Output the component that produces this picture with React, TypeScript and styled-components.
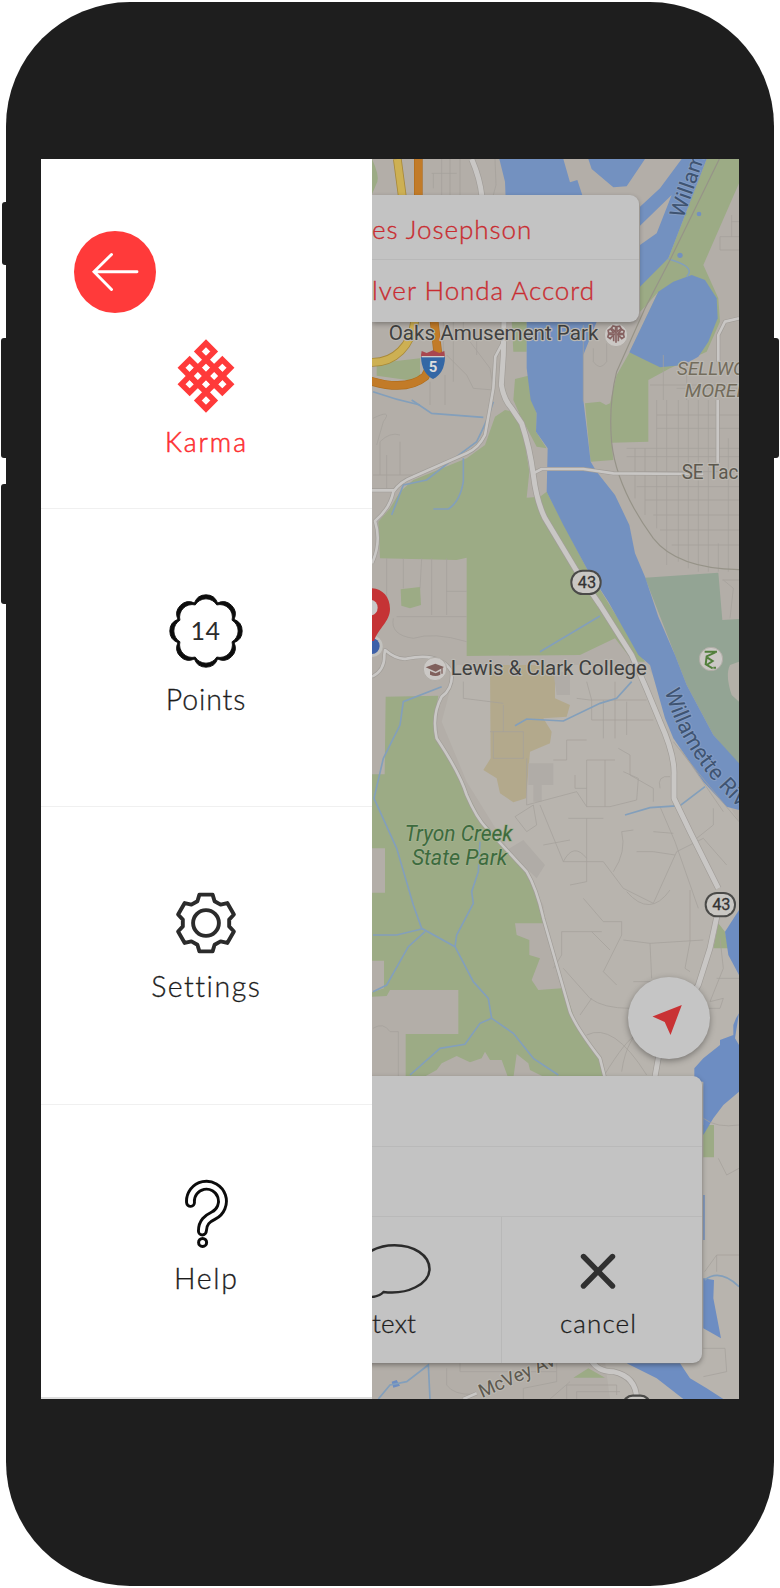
import React from "react";
import styled, { createGlobalStyle } from "styled-components";

const GlobalStyle = createGlobalStyle`
  * { box-sizing: border-box; }
  body { margin: 0; background: #fff; font-family: Lato, "Open Sans", sans-serif; }
`;

const Stage = styled.div`
  position: relative;
  width: 780px;
  height: 1588px;
  padding: 2px 6px;
  overflow: hidden;
`;

const SideKey = styled.i<{ $side: "left" | "right"; $top: number; $height: number; $out: number }>`
  position: absolute;
  ${(p) => p.$side}: ${(p) => p.$out}px;
  top: ${(p) => p.$top}px;
  width: 12px;
  height: ${(p) => p.$height}px;
  border-radius: 3px;
  background: #1e1e1e;
`;

const Phone = styled.div`
  position: relative;
  width: 768px;
  height: 1584px;
  padding: 157px 35px;
  border-radius: 124px;
  background: #1e1e1e;
`;

const Screen = styled.div`
  display: flex;
  width: 698px;
  height: 1240px;
  overflow: hidden;
`;

const Drawer = styled.nav`
  display: flex;
  flex-direction: column;
  flex: 0 0 331px;
  background: #fff;
  border-bottom: 2px solid #dedede;
`;

const Section = styled.section<{ $height: number; $top: number }>`
  display: flex;
  flex-direction: column;
  align-items: center;
  flex: 0 0 ${(p) => p.$height}px;
  padding: ${(p) => p.$top}px 2px 0 0;
  border-bottom: 1px solid #f0f0f0;
  &:last-child { border-bottom: 0; flex: 1; }
`;

const BackButton = styled.button`
  display: grid;
  place-items: center;
  align-self: flex-start;
  width: 82px;
  height: 82px;
  margin: -0.4px 0 25.4px 32.5px;
  padding: 0;
  border: 0;
  border-radius: 50%;
  background: #ff3a3a;
`;

const Label = styled.span<{ $gap: number; $size?: number; $spacing?: number; $accent?: boolean }>`
  margin-top: ${(p) => p.$gap}px;
  padding-left: ${(p) => p.$spacing ?? 0}px;
  font-size: ${(p) => p.$size ?? 28.5}px;
  font-weight: 300;
  line-height: 34px;
  letter-spacing: ${(p) => p.$spacing ?? 0}px;
  color: ${(p) => (p.$accent ? "#fd2f31" : "#1c1c1c")};
  -webkit-text-stroke: ${(p) => (p.$accent ? 0.55 : 0.3)}px currentColor;
  white-space: nowrap;
`;

const MapPane = styled.main`
  position: relative;
  display: flex;
  flex-direction: column;
  flex: 1;
  padding: 36px 0;
  overflow: hidden;
`;

const MapArt = styled.svg`
  position: absolute;
  inset: 0;
  width: 367px;
  height: 1240px;
`;

const DriverCard = styled.div`
  position: relative;
  width: 267px;
  border-radius: 0 9px 9px 0;
  background: #c3c3c3;
  box-shadow: 0 2px 5px rgba(0, 0, 0, 0.3);
`;

const DriverRow = styled.div<{ $spacing: number }>`
  height: 64px;
  font-size: 26px;
  font-weight: 300;
  line-height: 68px;
  letter-spacing: ${(p) => p.$spacing}px;
  color: #c92c31;
  -webkit-text-stroke: 0.35px currentColor;
  white-space: nowrap;
  & + & { height: 63px; line-height: 61px; border-top: 1px solid #b8b8b8; }
`;

const LocateButton = styled.button`
  position: relative;
  align-self: flex-end;
  width: 82px;
  height: 82px;
  margin: auto 29px 17px 0;
  padding: 0;
  border: 0;
  border-radius: 50%;
  background: #c5c5c5;
  box-shadow: 0 2px 6px rgba(0, 0, 0, 0.35);
`;

const RidePanel = styled.div`
  position: relative;
  width: 415px;
  height: 287px;
  margin-left: -85px;
  border-radius: 9px;
  background: #c3c3c3;
  box-shadow: 0 2px 5px rgba(0, 0, 0, 0.35);
`;

const PanelRow = styled.div`
  height: 70.5px;
  border-bottom: 1px solid #b9b9b9;
`;

const Actions = styled.div`
  display: grid;
  grid-template-columns: 214px 1fr;
`;

const Action = styled.div<{ $shift?: number }>`
  display: flex;
  flex-direction: column;
  align-items: center;
  height: 146px;
  padding: 25px ${(p) => p.$shift ?? 0}px 0 0;
  & + & { border-left: 1px solid #b8b8b8; }
`;

const steps = [[0, -24.5], [-16.33, -8.17], [16.33, -8.17], [0, -8.17], [-8.17, 0], [8.17, 0], [-16.33, 8.17], [0, 8.17], [16.33, 8.17], [0, 24.5]];

const KnotIcon = () => (
  <svg width="60" height="76" viewBox="-30 -38 60 76" fill="none" stroke="#ff3a3a" strokeWidth="5.6">
    {steps.map(([x, y]) => (
      <path key={`${x},${y}`} d={`M${x} ${y - 8.17}l8.17 8.17-8.17 8.17-8.17-8.17z`} />
    ))}
  </svg>
);

const polar = (r: number, deg: number) =>
  `${(r * Math.sin((deg * Math.PI) / 180)).toFixed(2)} ${(-r * Math.cos((deg * Math.PI) / 180)).toFixed(2)}`;

const badgePath = (notch: number, r: number) =>
  `M${polar(notch, -22.5)}` +
  Array.from({ length: 8 }, (_, i) => `A${r} ${r} 0 0 1 ${polar(notch, i * 45 + 22.5)}`).join("") + "Z";

const BadgeIcon = () => (
  <svg width="76" height="76" viewBox="-38 -38 76 76">
    <path d={badgePath(30.4, 12.4) + badgePath(28.2, 12.6)} fill="#0c0c0c" fillRule="evenodd" stroke="#0c0c0c" strokeWidth="0.9" />
    <text x="-0.4" y="8.8" textAnchor="middle" fontFamily="Lato, sans-serif" fontSize="25" letterSpacing="0.5" fill="#2b2b2b">14</text>
  </svg>
);

const turn = (x: number, y: number, deg: number) => {
  const a = (deg * Math.PI) / 180;
  return `${(x * Math.cos(a) - y * Math.sin(a)).toFixed(2)},${(x * Math.sin(a) + y * Math.cos(a)).toFixed(2)}`;
};

const gearPoints = [0, 60, 120, 180, 240, 300]
  .flatMap((d) => [turn(-8.6, -21.8, d), turn(-6.6, -28.4, d), turn(6.6, -28.4, d), turn(8.6, -21.8, d)])
  .join(" ");

const GearIcon = () => (
  <svg width="64" height="64" viewBox="-32 -32 64 64" fill="none" stroke="#2b2b2b" strokeWidth="3.9" strokeLinejoin="round">
    <polygon points={gearPoints} />
    <circle r="12.9" />
  </svg>
);

const hook = "M24.5 23.4A16 16 0 1 1 47.5 36.6C41.5 39.6 36.5 43 36.4 52";

const HelpIcon = () => (
  <svg width="80" height="72" viewBox="0 0 80 72" fill="none" strokeLinecap="round">
    <path d={hook} stroke="#0c0c0c" strokeWidth="10.8" />
    <path d={hook} stroke="#fff" strokeWidth="5" />
    <circle cx="36.6" cy="63.4" r="4" stroke="#0c0c0c" strokeWidth="3" />
  </svg>
);

const river = "#7391c0";
const green = "#9cab85";
const land = "#b3aea8";

const streams = [
  "M215 1595L100 1640L90 1710L40 1810L12 1930L80 2080L130 2250L155 2320L255 2375L310 2480L355 2530L365 2590L430 2635L490 2710L565 2760",
  "M330 2060L325 2150L305 2210L310 2245L260 2340L255 2375",
  "M9 2340H80L155 2322M165 2330L115 2375L50 2490L9 2510",
  "M365 2590L330 2605L285 2668L210 2680L120 2760",
  "M435 1712L470 1692L580 1698L690 1645L740 1630L785 1580",
  "M765 1980L840 1958L930 1952L1005 1895",
  "M125 735L185 775L340 787M280 910V980Q270 1040 235 1062H190",
  "M65 1080L100 990L170 975L240 920L320 860Q355 790 370 740",
  "M510 1490L690 1383M9 710Q80 735 150 750M895 312Q980 335 950 365",
  "M25 3732L60 3690L110 3680L175 3630L180 3732M1004 3375Q1050 3340 1107 3395",
];

const streets = [
  "M215 12V120M240 12V120M185 55H260M270 12V120M190 55V100",
  "M375 12L378 90L370 120M1050 245H1107M1050 245V285H1107M1085 180V245M1085 200H1107",
  "M220 500V590H190M250 500V680M280 500V560M300 560L360 640L370 700M320 520V600M230 600L290 660L310 700L370 705M225 660V750M180 680V750",
  "M670 580V620Q690 650 710 620V565M640 510V740",
  "M9 790Q70 760 40 800L20 870M30 960V860Q60 830 90 840M50 900V1000M90 860V960M9 960H130",
  "M50 1210V1390M100 1210V1300M155 1210L150 1300M185 1210V1380M230 1210V1380M230 1309H290M80 1385H290",
  "M70 1390Q60 1440 130 1450Q190 1430 290 1460",
  "M770 880H1107M770 905H1107M800 950H1107M800 995H1107M825 1035H1107M850 1080H1107M870 1125H1107M905 1170H1107M860 820H1107M860 780H1107M890 735V1230M860 735V1120M825 880V1080M795 880V1030M925 735V1220M955 735V1240M985 735V1250M1015 735V1250M1045 1165V1250M1075 850V1250M880 600V735M920 700H1107M840 690H1107M950 640V735",
  "M1060 1275L1090 1300L1080 1390M1057 1275H1107",
  "M280 1580V1630L400 1645M360 1730H460V1810H370V1730M400 1650V1730M470 1810V1950L620 1910L650 1955H720L800 1935L805 1870L760 1850M650 1955V1815H735M705 1815V1955",
  "M510 1950L580 2120H700L760 2200L850 2245L920 2090L1000 2050L1070 2130",
  "M435 1985L490 1950L500 2010L470 2030L435 1985M595 1990L700 1990M650 1990V2180L600 2190",
  "M580 2120Q610 2060 650 2110M520 2070L600 2055",
  "M620 1630L660 1635H830M665 1635V1695H850M700 1635V1750M735 1580V1750M770 1640V1740M650 1580L665 1635M590 1755H650M590 1755V1815H550",
  "M615 1860V1900H650M745 1780L780 1800V1860L850 1900V1940M870 1900Q860 1860 900 1865M870 1955L915 2060L985 2260M1030 1960V2010L980 2050M730 2150Q770 2090 755 2030L790 2025M800 2090H850L915 2100M850 2030L910 2035",
  "M910 1760Q980 1850 1107 2000M930 1780L1060 1970",
  "M575 2330H695M575 2330V2400L550 2440M640 2230L700 2300H755V2340L700 2450L740 2490M665 2330L720 2385M760 2355L840 2365L1000 2355M840 2365L845 2470M770 2210Q840 2290 900 2205",
  "M580 2440L660 2530Q700 2560 780 2560M665 2530L630 2580M650 2640Q730 2600 830 2760M755 2750Q770 2640 840 2600M790 2480H850M960 2205V2360L945 2440L960 2450",
  "M700 2765Q770 2650 800 2640M1050 2350L1060 2440L1020 2540M1040 2470H1107M1020 2540L1060 2530L1050 2560H1010M1000 2890Q1040 2920 1107 2910",
  "M1045 3010L1070 3060L1107 3040M1004 3350L1040 3300H1107M1040 3300V3350M1000 3580H1065L1070 3650L1000 3665M9 2620Q40 2600 60 2630H85V2765",
  "M270 3625V3650H560M560 3625V3680L460 3700V3732M600 3680L540 3732M590 3732V3690H740V3720M620 3732V3710H750M230 3640V3690Q250 3720 310 3718",
];

const RouteBadge = ({ x, y }: { x: number; y: number }) => (
  <g transform={`translate(${x} ${y})`}>
    <rect x="-47" y="-38" width="94" height="76" rx="37" fill="#4a4a48" />
    <rect x="-41" y="-32" width="82" height="64" rx="31" fill="#c9c7c3" />
    <text x="3" y="17" textAnchor="middle" fontSize="49" fill="#333" stroke="#333" strokeWidth="0.8">43</text>
  </g>
);

const roadLayers: { color: string; extra: number }[] = [
  { color: "#a19d98", extra: 4 },
  { color: "#c9c7c5", extra: 0 },
];

const CityMap = () => (
  <MapArt viewBox="6 12 1101 3720" preserveAspectRatio="none" fontFamily="Roboto, sans-serif">
    <rect x="0" y="0" width="1120" height="3750" fill={land} />
    <path d="M260 1530H830L1107 2000V3732H720L520 2250L290 1880L215 1700Z" fill="#b8b4ae" />
    <g fill={green}>
      <path d="M6 12Q28 60 22 80L6 118Z" />
      <path d="M20 625L150 610V680L20 662Z" />
      <path d="M1010 12H1107V85L1000 330L1045 430L1050 500L1010 590L900 640L835 675V860L725 863L730 915L662 920L645 745L690 740L708 750L720 745L740 660L780 590L865 410L825 455L810 470V390L895 310Z" />
      <path d="M425 495H470V590H430ZM435 672L475 662L485 735L500 775L498 830L530 880L500 875L450 780L430 735Z" />
      <path d="M405 765L375 785L345 870L290 910L130 975L90 1010L60 1060L25 1100L30 1210L260 1215L290 1208V1503L630 1500L735 1450L790 1520H825L650 1240L530 1010L510 1025L470 1028L478 950L450 775Z" />
      <path d="M92 1303L150 1296L153 1350L120 1360L94 1352Z" />
      <path d="M47 1625L205 1622L192 1700L200 1750L270 1870L330 1990L420 2090L490 2180L520 2290L560 2430L620 2610L690 2710L705 2770H6V1858H44Z" />
      <path d="M1045 2305L1065 2330L1075 2380H1030ZM1000 2910H1032V3007H1000ZM610 3668L655 3640L705 3668Z" />
    </g>
    <path d="M825 1268L1045 1253L1057 1395L1107 1392V1830L1030 1740L950 1590L915 1500Z" fill="#93a494" />
    <path d="M1107 1520L1080 1530Q1065 1560 1085 1620L1107 1640Z" fill="#b3b0a8" />
    <path d="M6 2080H45V2213H6ZM6 2417H42V2500L6 2512ZM60 2505H265V2637H107V2770H6V2525L50 2523ZM435 2305H520L575 2500L505 2505L485 2475L510 2410L478 2400V2355L440 2340ZM155 2770L200 2745L215 2725L260 2703L300 2722L335 2710L345 2690L360 2715L395 2715L415 2770ZM430 2770L440 2697L475 2725L480 2745L530 2770Z" fill={land} />
    <path d="M360 1530H550L555 1570V1630L600 1650L590 1685L520 1690L545 1730L540 1765L480 1790L468 1930L430 1942L390 1915L380 1870L340 1845L362 1810Z" fill="#b3a98c" />
    <path d="M475 1825H550V1890H515V1940H490V1890H475ZM410 2085L460 2055L525 2130L500 2170ZM550 1550H600V1620H560Z" fill="#b0aca7" />
    <g fill={river}>
      <path d="M388 12L405 80L407 130L470 490V640L482 735L500 775L498 830L533 880L530 1010L580 1110L650 1240L715 1340L805 1500L840 1530L885 1690L910 1750L1000 1880L1070 1955L1107 1965V1825L1030 1740L950 1590L915 1500L865 1385L825 1265L795 1195L778 1110L735 1020L680 950L662 920L640 735V600L680 500L640 130L622 75L600 82L580 12Z" />
      <path d="M655 12L665 42L730 97L770 94L825 12ZM935 12H1010L895 310L810 395V270L860 235L905 120L810 212V155L870 100Z" />
      <path d="M965 360L1005 375L1040 430L1043 490L1015 560L985 605L940 630L870 637L825 615L778 592L865 410L910 380Z" />
      <circle cx="987" cy="177" r="7" /><circle cx="930" cy="301" r="8" />
    </g>
    <path d="M1107 2265L1065 2330L1075 2400L1107 2460ZM1107 2575L1098 2590L1090 2610V2640L1050 2655V2670L1000 2710L973 2740V2780H1000V2940L1030 2890L1060 2850L1107 2810V2670L1095 2650ZM1000 3120H1004V3255H1000ZM1000 3370L1032 3375L1030 3430L1053 3550L1000 3520ZM770 3625H930L960 3670L1010 3700L1060 3732H940L860 3670ZM65 3680L80 3675L90 3692L70 3698Z" fill="#6d8dc2" />
    <g fill="none" stroke="#a5a19b" strokeWidth="2.2">{streets.map((d) => <path key={d} d={d} />)}</g>
    <g fill="none" stroke="#839fbb" strokeWidth="5">{streams.map((d) => <path key={d} d={d} />)}</g>
    <path d="M1048 12L900 315L825 460L740 650Q715 750 725 863Q740 1000 850 1150Q920 1240 1107 1244" fill="none" stroke="#969388" strokeWidth="3.5" />
    {roadLayers.map(({ color, extra }) => (
      <g key={color} fill="none" stroke={color} strokeLinejoin="round">
        <path d="M305 12Q330 70 336 125M402 495L400 600L394 690Q402 735 425 760L455 805Q480 880 490 960Q500 1040 525 1090L615 1240L690 1350L785 1500Q830 1600 870 1700Q915 1800 912 1860L912 1930L960 2030L1045 2200M1048 2250L1020 2380L985 2490L870 2680L855 2765M660 3610Q680 3650 730 3650Q800 3665 800 3735" strokeWidth={15 + extra} />
        <path d="M400 560L376 605L370 700Q360 760 345 840Q325 880 290 895L130 965Q90 980 70 1010Q60 1060 15 1098Q35 1160 6 1225M6 1006H72M490 955L515 942H640L730 955L1000 957M1043 735V925M1107 490L1065 500L1045 540V620" strokeWidth={8 + extra} />
        <path d="M6 1565Q45 1545 43 1500L45 1485Q80 1515 110 1511Q210 1490 245 1550Q250 1600 215 1625Q185 1680 200 1750Q270 1855 290 1920Q320 1990 350 2020L470 2150Q500 2200 520 2290L560 2430L600 2570Q620 2620 690 2710L705 2770M280 3732L320 3715" strokeWidth={8 + extra} />
      </g>
    ))}
    <g fill="none">
      <path d="M82 12L97 125M135 495C125 570 75 625 2 622" stroke="#a88939" strokeWidth="26" />
      <path d="M82 12L97 125M135 495C125 570 75 625 2 622" stroke="#cdb053" strokeWidth="21" />
      <path d="M145 12V125M192 495L203 590L165 665Q110 710 2 678" stroke="#b16d1b" strokeWidth="26" />
      <path d="M145 12V125M192 495L203 590L165 665Q110 710 2 678" stroke="#c27b28" strokeWidth="22" />
    </g>
    <path d="M155 588L170 594L189 586L208 594L223 588Q225 600 224 608H154Q152 600 155 588Z" fill="#a9474f" />
    <path d="M153 606H225Q224 655 189 672Q155 655 153 606Z" fill="#3467a5" />
    <path d="M155 605H223" stroke="#ccc" strokeWidth="4" />
    <text x="189" y="651" textAnchor="middle" fontSize="45" fontWeight="700" fill="#ddd">5</text>
    <g paintOrder="stroke" stroke="#bbb8b2" strokeWidth="7" strokeLinejoin="round" fill="#3f4040" fontSize="61">
      <text x="56" y="555" textLength="629" lengthAdjust="spacingAndGlyphs">Oaks Amusement Park</text>
      <text x="242" y="1560" textLength="589" lengthAdjust="spacingAndGlyphs" fontSize="63">Lewis &amp; Clark College</text>
      <text x="935" y="973" fill="#5d594f" fontSize="59" textLength="170" lengthAdjust="spacingAndGlyphs">SE Tac</text>
      <g fill="#736c5c" fontStyle="italic" fontSize="57">
        <text x="921" y="659" textLength="206" lengthAdjust="spacingAndGlyphs">SELLWO</text>
        <text x="944" y="725" textLength="186" lengthAdjust="spacingAndGlyphs">MOREL</text>
      </g>
      <g fill="#3d6b3e" fontStyle="italic" stroke="#a5b290" strokeWidth="5" fontSize="65">
        <text x="104" y="2057" textLength="324" lengthAdjust="spacingAndGlyphs">Tryon Creek</text>
        <text x="125" y="2130" textLength="287" lengthAdjust="spacingAndGlyphs">State Park</text>
      </g>
      <g fill="#3f5472" stroke="#849cc2" strokeWidth="6">
        <text transform="translate(940 192) rotate(-71)" fontSize="64" textLength="236" lengthAdjust="spacingAndGlyphs">Willame</text>
        <path id="flow" d="M884 1608C925 1745 985 1850 1150 1998" fill="none" stroke="none" />
        <text fontSize="66"><textPath href="#flow">Willamette Riv</textPath></text>
      </g>
      <text transform="translate(336 3729) rotate(-24)" fontSize="56" fill="#5d594f">McVey Av</text>
    </g>
    <RouteBadge x={648} y={1282} />
    <RouteBadge x={1051} y={2249} />
    <rect x="760" y="3722" width="80" height="60" rx="28" fill="#c9c7c3" stroke="#4a4a48" strokeWidth="7" />
    {[[738, 540], [195, 1542], [1023, 1512]].map(([cx, cy]) => (
      <circle key={cx} cx={cx} cy={cy} r="35" fill="#cbc8c5" stroke="#b0aca6" strokeWidth="3" />
    ))}
    <g transform="translate(738 537)" fill="none" stroke="#876362" strokeWidth="5">
      {[-110, -65, -20, 25, 70, 110].map((a) => <path key={a} d="M0 -7L-7 -21L0 -26L7 -21Z" transform={`rotate(${a})`} />)}
      <path d="M0 -5V26M-7 0V22M7 0V22" />
    </g>
    <path d="M167 1537L196 1526L222 1536L197 1550ZM180 1548V1559Q197 1567 211 1559V1548L197 1555Z" fill="#80605c" />
    <path d="M216 1537V1556" stroke="#80605c" strokeWidth="4" />
    <path d="M1004 1490H1041M1036 1492L1010 1504L1007 1528L1028 1540M1012 1508L1028 1518L1010 1530M1030 1538H1038" fill="none" stroke="#527f3c" strokeWidth="6" />
    <circle cx="5" cy="1474" r="33" fill="#c3c2be" />
    <circle cx="5" cy="1473" r="24" fill="#3d60a8" />
    <path d="M2 1300C36 1300 60 1325 60 1362C60 1400 25 1420 12 1458H-40V1300Z" fill="#c53335" />
    <ellipse cx="3" cy="1358" rx="20" ry="23" fill="#c8c8c8" />
  </MapArt>
);

export default function App() {
  return (
    <>
      <GlobalStyle />
      <Stage>
        <SideKey $side="left" $out={2} $top={202} $height={63} />
        <SideKey $side="left" $out={1} $top={338} $height={120} />
        <SideKey $side="left" $out={1} $top={484} $height={120} />
        <SideKey $side="right" $out={1} $top={338} $height={120} />
        <Phone>
          <Screen>
            <Drawer>
              <Section $height={350} $top={72}>
                <BackButton aria-label="Back">
                  <svg width="50" height="42" viewBox="0 0 50 42" fill="none" stroke="#fff" strokeWidth="2.9" strokeLinecap="round">
                    <path d="M47 20.7H5M21.5 3.5L4 20.7L21.5 38.5" />
                  </svg>
                </BackButton>
                <KnotIcon />
                <Label $gap={11} $size={26.5} $spacing={2} $accent>Karma</Label>
              </Section>
              <Section $height={298} $top={84}>
                <BadgeIcon />
                <Label $gap={13} $spacing={0.9}>Points</Label>
              </Section>
              <Section $height={298} $top={83.5}>
                <GearIcon />
                <Label $gap={14.5} $spacing={1.5}>Settings</Label>
              </Section>
              <Section $height={292} $top={74}>
                <HelpIcon />
                <Label $gap={10} $spacing={1.7}>Help</Label>
              </Section>
            </Drawer>
            <MapPane>
              <CityMap />
              <DriverCard>
                <DriverRow $spacing={0.95}>es Josephson</DriverRow>
                <DriverRow $spacing={0.95}>lver Honda Accord</DriverRow>
              </DriverCard>
              <LocateButton aria-label="My location">
                <svg width="82" height="82" viewBox="628 977 82 82">
                  <path d="M681.8 1005L670.5 1035L664.7 1022L652.5 1016.5Z" fill="#c93234" />
                </svg>
              </LocateButton>
              <RidePanel>
                <PanelRow />
                <PanelRow />
                <Actions>
                  <Action>
                    <svg width="76" height="56" viewBox="356.5 1242 76 56" fill="none" stroke="#2b2b2b" strokeWidth="2.5">
                      <path d="M366 1297.5Q379 1297.5 384 1292C408 1295 430 1284 430 1269C430 1255 414 1245.2 395 1245.2C376 1245.2 360 1255 360 1269C360 1278 364 1284 370 1287" />
                    </svg>
                    <Label $gap={8} $size={26} $spacing={0.2}>text</Label>
                  </Action>
                  <Action $shift={8}>
                    <svg width="76" height="56" viewBox="0 0 76 56" stroke="#303030" strokeWidth="5.4" strokeLinecap="round">
                      <path d="M23.5 14.5L52.5 44M52.5 14.5L23.5 44" />
                    </svg>
                    <Label $gap={8} $size={26} $spacing={1.1}>cancel</Label>
                  </Action>
                </Actions>
              </RidePanel>
            </MapPane>
          </Screen>
        </Phone>
      </Stage>
    </>
  );
}
